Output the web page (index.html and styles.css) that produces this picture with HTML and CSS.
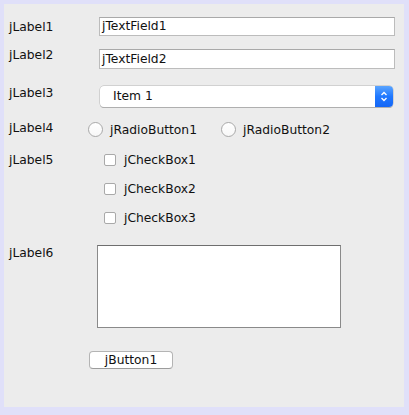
FILE: index.html
```html
<!DOCTYPE html>
<html>
<head>
<meta charset="utf-8">
<link rel="stylesheet" href="styles.css">
</head>
<body>
<div class="panel">
  <div class="row r1">
    <span class="lbl">jLabel1</span>
    <div class="field f1">jTextField1</div>
  </div>
  <div class="row r2">
    <span class="lbl">jLabel2</span>
    <div class="field f2">jTextField2</div>
  </div>
  <div class="row r3">
    <span class="lbl">jLabel3</span>
    <div class="combo">
      <span class="combo-text">Item 1</span>
      <span class="stepper">
        <svg width="18" height="21" viewBox="0 0 18 21"><path d="M6.5 9 L9 6.5 L11.5 9" fill="none" stroke="#fff" stroke-width="1.3"/><path d="M6.5 12 L9 14.5 L11.5 12" fill="none" stroke="#fff" stroke-width="1.3"/></svg>
      </span>
    </div>
  </div>
  <div class="row r4">
    <span class="lbl">jLabel4</span>
    <div class="radio first"><span class="circle"></span><span>jRadioButton1</span></div>
    <div class="radio"><span class="circle"></span><span>jRadioButton2</span></div>
  </div>
  <div class="row r5">
    <span class="lbl">jLabel5</span>
    <div class="checks">
      <div class="check"><span class="box"></span><span>jCheckBox1</span></div>
      <div class="check"><span class="box"></span><span>jCheckBox2</span></div>
      <div class="check"><span class="box"></span><span>jCheckBox3</span></div>
    </div>
  </div>
  <div class="row r8">
    <span class="lbl">jLabel6</span>
    <div class="area"></div>
  </div>
  <div class="row r9">
    <span class="lbl"></span>
    <div class="button">jButton1</div>
  </div>
</div>
</body>
</html>
```
FILE: styles.css
```css
html, body {
  margin: 0;
}
body {
  width: 409px;
  height: 415px;
  box-sizing: border-box;
  padding: 4px 5px 8px 4px;
  background: #e0e0f9;
  font-family: "DejaVu Sans", sans-serif;
  font-size: 12.3px;
  color: #111;
  overflow: hidden;
}
.panel {
  height: 403px;
  background: #ececec;
  padding: 0 0 0 5px;
  box-sizing: border-box;
  overflow: hidden;
}
.row {
  display: flex;
  align-items: flex-start;
}
.lbl {
  width: 79px;
  flex: none;
  line-height: 16px;
  height: 16px;
}
.field {
  box-sizing: border-box;
  background: #fff;
  border: 1px solid #bcbcbc;
  border-top-color: #a9a9a9;
  width: 296px;
  margin-left: 11px;
  padding-left: 2px;
}
.r1 { margin-top: 13px; }
.r1 .lbl { margin-top: 2px; }
.f1 { height: 19px; line-height: 17px; }
.r2 { margin-top: 11px; }
.f2 { height: 20px; line-height: 18px; margin-top: 2px; }
.r3 { margin-top: 16px; }
.combo {
  margin-left: 12px;
  margin-top: 1px;
  width: 293px;
  height: 21px;
  box-sizing: border-box;
  display: flex;
  background: #fff;
  border-radius: 4px;
  box-shadow: 0 0 0 0.5px #b5b5b5, 0 1px 0 #a8a8a8;
}
.combo-text {
  flex: 1;
  padding-left: 13px;
  line-height: 21px;
}
.stepper {
  width: 18px;
  height: 21px;
  border-radius: 0 4px 4px 0;
  background: linear-gradient(#5aa4ff, #1f78ff 50%, #1466f5);
  display: block;
}
.stepper svg { display: block; }
.r4 { margin-top: 13px; }
.radio {
  display: flex;
  align-items: center;
  gap: 7px;
  margin-top: 2px;
  height: 15px;
}
.radio.first { width: 133px; }
.circle {
  width: 15px;
  height: 15px;
  box-sizing: border-box;
  border-radius: 50%;
  border: 1px solid #a9a9a9;
  background: linear-gradient(#fff, #f7f7f7);
  flex: none;
}
.r5 { margin-top: 15px; }
.checks {
  margin-left: 16px;
  display: flex;
  flex-direction: column;
  gap: 13px;
}
.check {
  display: flex;
  align-items: center;
  gap: 8px;
  height: 16px;
}
.box {
  width: 12px;
  height: 12px;
  box-sizing: border-box;
  border: 1px solid #a9a9a9;
  border-radius: 2px;
  background: #fff;
  flex: none;
}
.r8 { margin-top: 19px; }
.area {
  margin-left: 9px;
  width: 244px;
  height: 83px;
  box-sizing: border-box;
  background: #fff;
  border: 1px solid #8a8a8a;
  border-top-color: #6e6e6e;
}
.r9 { margin-top: 23px; }
.button {
  margin-left: 1px;
  width: 84px;
  height: 18px;
  box-sizing: border-box;
  background: #fff;
  border: 1px solid #b4b4b4;
  border-bottom-color: #9c9c9c;
  border-radius: 4px;
  text-align: center;
  line-height: 16px;
}
```
